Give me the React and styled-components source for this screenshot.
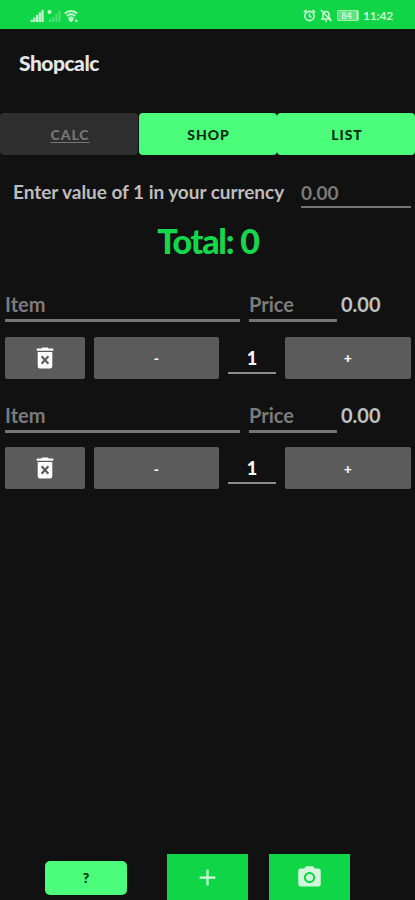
import React, { useState } from 'react';
import styled, { createGlobalStyle } from 'styled-components';
import { MdAdd, MdCameraAlt } from 'react-icons/md';

const GlobalStyle = createGlobalStyle`
  * {
    box-sizing: border-box;
    margin: 0;
    padding: 0;
  }

  body {
    background: #111111;
    font-family: 'Lato', 'Open Sans', sans-serif;
    overflow: hidden;
  }

  button,
  input {
    border: none;
    font-family: inherit;
  }
`;

const Screen = styled.div`
  display: flex;
  flex-direction: column;
  width: 415px;
  height: 900px;
  background: #111111;
  overflow: hidden;
`;

const StatusBar = styled.div`
  display: flex;
  align-items: center;
  justify-content: space-between;
  height: 29px;
  padding: 2px 22px 0 30px;
  background: #10d547;
  color: #c9f8d3;
`;

const StatusGroup = styled.div`
  display: flex;
  align-items: center;
  gap: ${(props) => props.$gap || 3}px;
`;

const Battery = styled.span`
  display: flex;
  align-items: center;
  justify-content: center;
  width: 22px;
  height: 11px;
  border: 1px solid #9cf0ae;
  border-right-width: 3px;
  border-radius: 2px;
  background: #5fe381;
  font-size: 9px;
  font-weight: 900;
`;

const Clock = styled.span`
  width: 30px;
  font-size: 12px;
  font-weight: 700;
  letter-spacing: -0.2px;
  white-space: nowrap;
`;

const Header = styled.header`
  height: 84px;
  padding: 20px 19px 0;
`;

const Title = styled.h1`
  color: #e6e6e6;
  font-size: 21px;
  font-weight: 900;
  line-height: 28px;
  letter-spacing: -0.5px;
`;

const Tabs = styled.div`
  display: grid;
  grid-template-columns: 138px 138px 138px;
  column-gap: 0.5px;
  height: 42px;
`;

const Tab = styled.button`
  padding-left: 2px;
  border-radius: 4px;
  background: ${(props) => (props.$active ? '#2e2e2e' : '#4bfd7b')};
  color: ${(props) => (props.$active ? '#777777' : '#0c2a14')};
  font-size: 14px;
  font-weight: 900;
  letter-spacing: 0.9px;
  text-decoration: ${(props) => (props.$active ? 'underline' : 'none')};
  text-underline-offset: 2px;
`;

const CurrencyRow = styled.div`
  display: flex;
  align-items: center;
  justify-content: space-between;
  height: 53px;
  padding: 20px 4px 0 13px;
`;

const CurrencyLabel = styled.label`
  color: #bdbdbd;
  font-size: 19px;
  font-weight: 700;
  line-height: 28px;
  letter-spacing: -0.04px;
  white-space: nowrap;
`;

const Field = styled.input`
  width: ${(props) => props.$width}px;
  height: 33px;
  border-bottom: 3px solid #747474;
  border-radius: 0;
  background: transparent;
  color: #ffffff;
  font-size: 20px;
  font-weight: 700;
  outline: none;

  &::placeholder {
    color: #7b7b7b;
    opacity: 1;
  }
`;

const CurrencyField = styled(Field)`
  padding-top: 3px;
  border-bottom-width: 2px;
  font-size: 19px;
`;

const Total = styled.h2`
  height: 81px;
  padding: 13px 0 0 1px;
  color: #16d74a;
  font-size: 34px;
  font-weight: 900;
  line-height: 40px;
  letter-spacing: -1.2px;
  text-align: center;
`;

const Entry = styled.section`
  height: 110.5px;
  padding: 0 4px 0 5px;
`;

const EntryFields = styled.div`
  display: grid;
  grid-template-columns: 235px 88px 1fr;
  column-gap: 9px;
  height: 33px;
`;

const Amount = styled.span`
  margin-left: -5px;
  color: #c0c0c0;
  font-size: 20px;
  font-weight: 700;
  line-height: 30px;
`;

const Controls = styled.div`
  display: grid;
  grid-template-columns: 80px 125.5px 48.5px 126px;
  column-gap: 8.6px;
  height: 42px;
  margin-top: 14.5px;
`;

const GreyButton = styled.button`
  display: flex;
  align-items: center;
  justify-content: center;
  border-radius: 2px;
  background: #5b5b5c;
  color: #ffffff;
  font-size: 14px;
  font-weight: 900;
`;

const Quantity = styled.span`
  height: 37px;
  border-bottom: 2px solid #8c8c8c;
  color: #ffffff;
  font-size: 18px;
  font-weight: 900;
  line-height: 43px;
  text-align: center;
`;

const Footer = styled.footer`
  display: flex;
  align-items: flex-start;
  height: 46px;
  margin-top: auto;
  padding-left: 45px;
`;

const HelpButton = styled.button`
  width: 82px;
  height: 34px;
  margin: 6.5px 40.4px 0 0;
  border-radius: 5px;
  background: #4bfd7b;
  color: #0c2a14;
  font-size: 14px;
  font-weight: 900;
`;

const ActionButton = styled.button`
  display: flex;
  align-items: center;
  justify-content: center;
  width: 81px;
  height: 46px;
  margin-right: 21px;
  background: #10d547;
  color: #d2f5db;
`;

const SignalIcon = () => (
  <svg width="14" height="12" viewBox="0 0 14 12" fill="currentColor">
    <path d="M.6 9.800h2.200V12H.6zM3.300 7.500h2.200V12H3.300zM6 5h2.200v7H6zM8.700 2.500h2.200V12H8.700zM11.400 0h2.200v12h-2.200z" />
  </svg>
);

const NoSimIcon = () => (
  <svg width="14" height="12" viewBox="0 0 14 12" fill="currentColor">
    <circle cx="2.5" cy="2" r="2" />
    <path opacity=".35" d="M2 9h2v3H2zM5.2 7h2v5h-2zM8.4 4h2v8h-2zM11.5 1h2v11h-2z" />
  </svg>
);

const WifiIcon = () => (
  <svg width="15" height="12" viewBox="0 0 15 12" fill="none" stroke="currentColor" strokeWidth="1.9">
    <path d="M.8 3.6Q7 -1.5 13.2 3.6M2.8 6Q7 2.6 11.2 6M4.8 8.3Q7 6.5 9.2 8.3" />
    <path d="M5.8 9.8h2.4L7 11.2zM11 10.7h2.500" />
  </svg>
);

const AlarmIcon = () => (
  <svg width="13" height="13" viewBox="0 0 13 13" fill="none" stroke="currentColor" strokeWidth="1.6">
    <circle cx="6.5" cy="7" r="4.6" />
    <path d="M.8 3.4 3.6 1M12.2 3.4 9.4 1M6.5 4.5V7.2L8.4 8.3" />
  </svg>
);

const MutedBellIcon = () => (
  <svg width="12" height="13" viewBox="0 0 12 13" fill="none" stroke="currentColor" strokeWidth="1.5">
    <path d="M2 10h8.2L9 8.4V5.5C9 1.4 3 1.4 3 5.5v2.9zM5 12h2M1 1l10.5 11.3" />
  </svg>
);

const TrashIcon = () => (
  <svg width="18" height="22" viewBox="0 0 18 22">
    <path fill="#fff" d="M.7 1.5h4.6L6.4.4h5.2l1.1 1.1h4.6v2.3H.7zM1.700 5h14.600v14.3a2.2 2.2 0 0 1-2.2 2.2H3.900a2.2 2.2 0 0 1-2.2-2.2z" />
    <path d="m5.6 9.3 6.800 7.400m0-7.400-6.800 7.400" stroke="#5b5b5c" strokeWidth="2.2" />
  </svg>
);

function ShopItem() {
  const [count, setCount] = useState(1);
  const [price, setPrice] = useState('');

  return (
    <Entry>
      <EntryFields>
        <Field $width={235} placeholder="Item" />
        <Field
          $width={88}
          placeholder="Price"
          value={price}
          onChange={(e) => setPrice(e.target.value)}
        />
        <Amount>{(count * (Number(price) || 0)).toFixed(2)}</Amount>
      </EntryFields>
      <Controls>
        <GreyButton aria-label="Delete"><TrashIcon /></GreyButton>
        <GreyButton onClick={() => setCount(Math.max(0, count - 1))}>-</GreyButton>
        <Quantity>{count}</Quantity>
        <GreyButton onClick={() => setCount(count + 1)}>+</GreyButton>
      </Controls>
    </Entry>
  );
}

export default function App() {
  const [tab, setTab] = useState('CALC');
  const [items, setItems] = useState([1, 2]);

  return (
    <>
      <GlobalStyle />
      <Screen>
        <StatusBar>
          <StatusGroup>
            <SignalIcon />
            <NoSimIcon />
            <WifiIcon />
          </StatusGroup>
          <StatusGroup $gap={4.5}>
            <AlarmIcon />
            <MutedBellIcon />
            <Battery>84</Battery>
            <Clock>11:42</Clock>
          </StatusGroup>
        </StatusBar>
        <Header>
          <Title>Shopcalc</Title>
        </Header>
        <Tabs>
          {['CALC', 'SHOP', 'LIST'].map((name) => (
            <Tab key={name} $active={tab === name} onClick={() => setTab(name)}>
              {name}
            </Tab>
          ))}
        </Tabs>
        <CurrencyRow>
          <CurrencyLabel htmlFor="rate">Enter value of 1 in your currency</CurrencyLabel>
          <CurrencyField id="rate" $width={110} placeholder="0.00" />
        </CurrencyRow>
        <Total>Total: 0</Total>
        {items.map((id) => (
          <ShopItem key={id} />
        ))}
        <Footer>
          <HelpButton>?</HelpButton>
          <ActionButton aria-label="Add" onClick={() => setItems([...items, items.length + 1])}>
            <MdAdd size={27} />
          </ActionButton>
          <ActionButton aria-label="Camera">
            <MdCameraAlt size={27} />
          </ActionButton>
        </Footer>
      </Screen>
    </>
  );
}
